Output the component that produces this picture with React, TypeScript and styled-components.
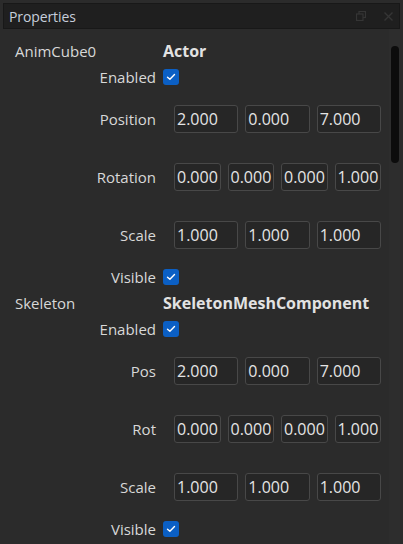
import React from "react";
import styled, { createGlobalStyle } from "styled-components";

const GlobalStyle = createGlobalStyle`
  html, body { margin: 0; padding: 0; background: #2b2b2b; }
  body { font-family: "Open Sans", "Noto Sans", sans-serif; color: #d6d6d6; }
  * { box-sizing: border-box; }
`;

const Panel = styled.div`
  width: 403px;
  height: 544px;
  padding: 3px 3px 0 3px;
  display: flex;
  flex-direction: column;
  background: #2b2b2b;
  overflow: hidden;
`;

const TitleBar = styled.div`
  height: 26px;
  flex: none;
  display: flex;
  align-items: center;
  padding: 0 6px 0 5px;
  background: #1f1f1f;
  border: 1px solid #181818;
`;

const Title = styled.span`
  flex: 1;
  font-size: 14px;
  color: #c6cedb;
  letter-spacing: -0.1px;
`;

const TitleIcons = styled.div`
  display: flex;
  align-items: center;
  gap: 18px;
`;

const Body = styled.div`
  flex: 1;
  display: flex;
  min-height: 0;
`;

const Content = styled.div`
  flex: 1;
  padding-top: 9px;
  display: flex;
  flex-direction: column;
`;

const Track = styled.div`
  width: 11px;
  flex: none;
  padding: 17px 1px 0 2px;
  background: #2d2d2d;
`;

const Thumb = styled.div`
  height: 117px;
  border-radius: 4px;
  background: #0c0c0c;
`;

const Row = styled.div<{ $h: number }>`
  height: ${(p) => p.$h}px;
  display: grid;
  grid-template-columns: 153px 1fr;
  column-gap: 7px;
  align-items: center;
`;

const Label = styled.span`
  text-align: right;
  font-size: 15px;
  color: #d8d8d8;
  white-space: nowrap;
`;

const NameLabel = styled.span`
  padding-left: 12px;
  font-size: 15px;
  color: #d8d8d8;
  white-space: nowrap;
`;

const TypeName = styled.span`
  font-size: 16px;
  font-weight: 700;
  color: #e2e2e2;
  white-space: nowrap;
`;

const Check = styled.span`
  width: 16px;
  height: 16px;
  border-radius: 3px;
  background: #0b5fc4;
  display: flex;
  align-items: center;
  justify-content: center;
`;

const Inputs = styled.div`
  margin-left: 11px;
  width: 207px;
  display: flex;
  gap: 7px;
`;

const Field = styled.div`
  flex: 1;
  min-width: 0;
  height: 28px;
  border: 1.5px solid #484848;
  border-radius: 3px;
  background: #262626;
  display: flex;
  align-items: center;
  padding-left: 2px;
  font-size: 16px;
  color: #e4e4e4;
  overflow: hidden;
  white-space: nowrap;
`;

const CheckMark = () => (
  <svg width="10" height="8" viewBox="0 0 10 8">
    <path d="M1.5 4.2 L3.9 6.3 L8.5 1.6" fill="none" stroke="#fff" strokeWidth="1.4" strokeLinecap="round" strokeLinejoin="round" />
  </svg>
);

const CheckRow = ({ label }: { label: string }) => (
  <Row $h={26}>
    <Label>{label}</Label>
    <Check>
      <CheckMark />
    </Check>
  </Row>
);

const VecRow = ({ label, values }: { label: string; values: string[] }) => (
  <Row $h={58}>
    <Label>{label}</Label>
    <Inputs>
      {values.map((v, i) => (
        <Field key={i}>{v}</Field>
      ))}
    </Inputs>
  </Row>
);

const NameRow = ({ name, type }: { name: string; type: string }) => (
  <Row $h={26}>
    <NameLabel>{name}</NameLabel>
    <TypeName>{type}</TypeName>
  </Row>
);

export default function App() {
  return (
    <>
      <GlobalStyle />
      <Panel>
        <TitleBar>
          <Title>Properties</Title>
          <TitleIcons>
            <svg width="10" height="10" viewBox="0 0 10 10">
              <rect x="3" y="0.5" width="6.5" height="6" fill="none" stroke="#353535" strokeWidth="1.2" />
              <rect x="0.5" y="3" width="6.5" height="6.5" fill="#1f1f1f" stroke="#353535" strokeWidth="1.2" />
            </svg>
            <svg width="9" height="9" viewBox="0 0 9 9">
              <path d="M0.5 0.5 L8.5 8.5 M8.5 0.5 L0.5 8.5" stroke="#353535" strokeWidth="1.4" />
            </svg>
          </TitleIcons>
        </TitleBar>
        <Body>
          <Content>
            <NameRow name="AnimCube0" type="Actor" />
            <CheckRow label="Enabled" />
            <VecRow label="Position" values={["2.000", "0.000", "7.000"]} />
            <VecRow label="Rotation" values={["0.000", "0.000", "0.000", "1.000"]} />
            <VecRow label="Scale" values={["1.000", "1.000", "1.000"]} />
            <CheckRow label="Visible" />
            <NameRow name="Skeleton" type="SkeletonMeshComponent" />
            <CheckRow label="Enabled" />
            <VecRow label="Pos" values={["2.000", "0.000", "7.000"]} />
            <VecRow label="Rot" values={["0.000", "0.000", "0.000", "1.000"]} />
            <VecRow label="Scale" values={["1.000", "1.000", "1.000"]} />
            <CheckRow label="Visible" />
          </Content>
          <Track>
            <Thumb />
          </Track>
        </Body>
      </Panel>
    </>
  );
}
